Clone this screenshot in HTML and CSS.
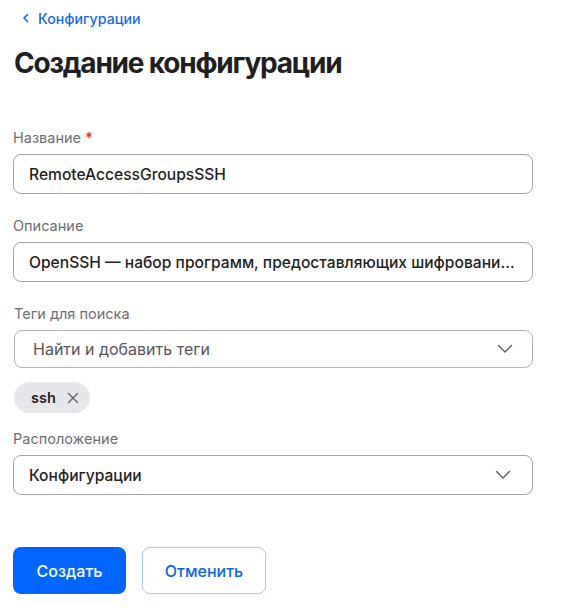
FILE: index.html
```html
<!DOCTYPE html>
<html lang="ru">
<head>
<meta charset="utf-8">
<link rel="stylesheet" href="styles.css">
</head>
<body>
<div class="page">
  <a class="back" href="#">
    <svg class="back-icon" width="10" height="10" viewBox="0 0 10 10"><path d="M6.5 1.5 L3 5 L6.5 8.5" fill="none" stroke="currentColor" stroke-width="1.6" stroke-linecap="round" stroke-linejoin="round"/></svg>
    <span>Конфигурации</span>
  </a>
  <h1 class="title">Создание конфигурации</h1>

  <div class="field field-first">
    <label class="label">Название <span class="req">*</span></label>
    <div class="input">RemoteAccessGroupsSSH</div>
  </div>

  <div class="field">
    <label class="label">Описание</label>
    <div class="input"><span class="ellipsis">OpenSSH — набор программ, предоставляющих шифрование сеансов связи</span></div>
  </div>

  <div class="field">
    <label class="label label-shift">Теги для поиска</label>
    <div class="input select tags">
      <span class="placeholder">Найти и добавить теги</span>
      <svg class="chev" width="16" height="10" viewBox="0 0 16 10"><path d="M1.5 1.5 L8 8 L14.5 1.5" fill="none" stroke="currentColor" stroke-width="1.4" stroke-linecap="round" stroke-linejoin="round"/></svg>
    </div>
    <div class="chips">
      <span class="chip">ssh
        <svg class="chip-x" width="12" height="12" viewBox="0 0 12 12"><path d="M1.5 1.5 L10.5 10.5 M10.5 1.5 L1.5 10.5" fill="none" stroke="currentColor" stroke-width="1.3" stroke-linecap="round"/></svg>
      </span>
    </div>
  </div>

  <div class="field field-loc">
    <label class="label">Расположение</label>
    <div class="input select loc">
      <span>Конфигурации</span>
      <svg class="chev" width="16" height="10" viewBox="0 0 16 10"><path d="M1.5 1.5 L8 8 L14.5 1.5" fill="none" stroke="currentColor" stroke-width="1.4" stroke-linecap="round" stroke-linejoin="round"/></svg>
    </div>
  </div>

  <div class="actions">
    <button class="btn btn-primary">Создать</button>
    <button class="btn btn-secondary">Отменить</button>
  </div>
</div>
</body>
</html>
```

FILE: styles.css
```css
* { box-sizing: border-box; }
html, body { margin: 0; padding: 0; background: #fff; }
body {
  font-family: Inter, "Noto Sans", "DejaVu Sans", sans-serif;
  color: #1f1f22;
}
.page {
  padding: 0 13px;
  width: 546px;
}
.back {
  display: flex;
  align-items: center;
  gap: 7px;
  height: 36px;
  padding-left: 8px;
  color: #1469e6;
  text-decoration: none;
  font-size: 14.2px;
  font-weight: 500;
}
.back-icon { color: #1469e6; }
.title {
  margin: 9px 0 0 1px;
  font-size: 28px;
  font-weight: 700;
  letter-spacing: -1.2px;
  line-height: 36px;
  color: #1f1f22;
}
.field { display: flex; flex-direction: column; }
.field-first { margin-top: 48px; }
.field + .field { margin-top: 23px; }
.field.field-loc { margin-top: 17px; }
.label {
  font-size: 14.5px;
  color: #6e6e73;
  line-height: 18px;
  margin-bottom: 7px;
}
.label-shift { margin-left: 1px; }
.req { color: #e5322d; font-weight: 600; }
.input {
  height: 40px;
  border: 1px solid #a3a3a8;
  border-radius: 8px;
  display: flex;
  align-items: center;
  padding: 0 16px 0 15px;
  font-size: 15.6px;
  font-weight: 450;
  color: #1f1f22;
  min-width: 0;
}
.ellipsis {
  white-space: nowrap;
  overflow: hidden;
  text-overflow: ellipsis;
  min-width: 0;
}
.select { justify-content: space-between; }
.tags {
  height: 38px;
  margin-left: 1px;
  padding-left: 18px;
  border-color: #b4b4b9;
  padding-right: 19px;
}
.loc { padding-right: 21px; }
.placeholder { color: #55555a; font-weight: 400; font-size: 16px; }
.chev { color: #5a5a60; }
.chips { display: flex; margin-top: 14px; margin-left: 1px; }
.chip {
  display: inline-flex;
  align-items: center;
  gap: 11px;
  height: 31px;
  padding: 0 11px 0 17px;
  background: #e6e7eb;
  border-radius: 16px;
  font-size: 14.5px;
  font-weight: 600;
  color: #1f1f22;
}
.chip-x { color: #606066; }
.actions {
  display: flex;
  gap: 16px;
  margin-top: 52px;
}
.btn {
  height: 47px;
  border-radius: 8px;
  font-family: inherit;
  font-size: 16px;
  font-weight: 500;
  cursor: pointer;
}
.btn-primary {
  width: 113px;
  background: #0066ff;
  color: #fff;
  border: none;
}
.btn-secondary {
  width: 124px;
  background: #fff;
  color: #0b63e8;
  border: 1px solid #a8c8ff;
}
```
